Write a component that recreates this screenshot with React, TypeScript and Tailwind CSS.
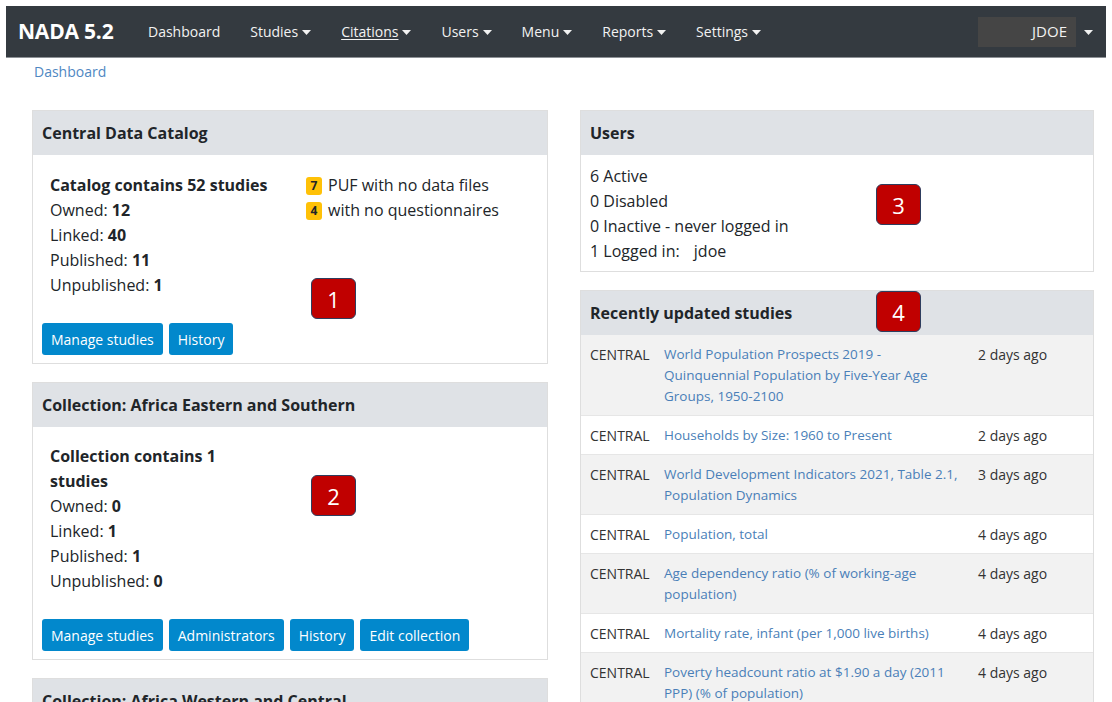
import React from "react";

const font = { fontFamily: '"Open Sans", "Noto Sans", Arial, sans-serif' };

function Caret() {
  return (
    <svg width="9" height="5" viewBox="0 0 9 5" className="ml-[4px] mt-[1px]">
      <path d="M0 0 L9 0 L4.5 5 Z" fill="currentColor" />
    </svg>
  );
}

function NavItem({ label, caret, underline }: { label: string; caret?: boolean; underline?: boolean }) {
  return (
    <div className="flex items-center text-[14px] text-[#f2f2f2]">
      <span className={underline ? "underline underline-offset-2" : ""}>{label}</span>
      {caret && <Caret />}
    </div>
  );
}

function Marker({ n, className }: { n: string; className: string }) {
  return (
    <div
      className={
        "absolute w-[45px] h-[41px] rounded-[6px] bg-[#c00000] border border-[#2e3d5e] flex items-center justify-center text-white text-[22px] leading-none " +
        className
      }
    >
      {n}
    </div>
  );
}

function Btn({ children }: { children: React.ReactNode }) {
  return (
    <div className="h-[32px] px-[9px] flex items-center rounded-[3px] bg-[#0288cc] text-white text-[14px]">
      {children}
    </div>
  );
}

function CardHeader({ title }: { title: string }) {
  return (
    <div className="h-[44px] bg-[#dfe2e6] flex items-center px-[9px] text-[16px] font-bold text-[#212529]">
      {title}
    </div>
  );
}

const rows: { title: string[]; date: string }[] = [
  { title: ["World Population Prospects 2019 -", "Quinquennial Population by Five-Year Age", "Groups, 1950-2100"], date: "2 days ago" },
  { title: ["Households by Size: 1960 to Present"], date: "2 days ago" },
  { title: ["World Development Indicators 2021, Table 2.1,", "Population Dynamics"], date: "3 days ago" },
  { title: ["Population, total"], date: "4 days ago" },
  { title: ["Age dependency ratio (% of working-age", "population)"], date: "4 days ago" },
  { title: ["Mortality rate, infant (per 1,000 live births)"], date: "4 days ago" },
  { title: ["Poverty headcount ratio at $1.90 a day (2011", "PPP) (% of population)"], date: "4 days ago" },
];

export default function App() {
  return (
    <div className="w-[1112px] h-[702px] overflow-hidden bg-white pt-[6px] px-[6px] text-[#212529]" style={font}>
      {/* Navbar */}
      <div className="h-[52px] bg-[#343a40] border-b border-[#8d9196] flex items-center pl-[12px] pr-[12px]">
        <div className="text-white font-bold text-[21px] tracking-[-0.2px] w-[96px]">NADA 5.2</div>
        <div className="flex items-center gap-[30px] ml-[34px]">
          <NavItem label="Dashboard" />
          <NavItem label="Studies" caret />
          <NavItem label="Citations" caret underline />
          <NavItem label="Users" caret />
          <NavItem label="Menu" caret />
          <NavItem label="Reports" caret />
          <NavItem label="Settings" caret />
        </div>
        <div className="ml-auto flex items-center">
          <div className="w-[98px] h-[30px] bg-[#454545] flex items-center justify-end pr-[9px] text-[15px] text-[#f2f2f2]">
            JDOE
          </div>
          <div className="text-[#f2f2f2] ml-[4px] mr-[1px]">
            <Caret />
          </div>
        </div>
      </div>

      {/* Breadcrumb */}
      <div className="pl-[28px] pt-[4px] h-[52px] text-[14px] text-[#4f87c2] leading-[20px]">Dashboard</div>

      <div className="flex pl-[26px] gap-[32px] items-start">
        {/* Left column */}
        <div className="w-[516px] flex flex-col gap-[18px]">
          <div className="relative border border-[#dedede]">
            <CardHeader title="Central Data Catalog" />
            <div className="px-[9px] pt-[18px] pb-[8px]">
              <div className="flex px-[8px] text-[16px] leading-[25px]">
                <div className="w-[256px]">
                  <div className="font-bold">Catalog contains 52 studies</div>
                  <div>Owned: <b>12</b></div>
                  <div>Linked: <b>40</b></div>
                  <div>Published: <b>11</b></div>
                  <div>Unpublished: <b>1</b></div>
                </div>
                <div>
                  <div className="flex items-center">
                    <span className="w-[16px] h-[18px] rounded-[3px] bg-[#ffc107] text-[12px] font-bold flex items-center justify-center mr-[6px]">7</span>
                    PUF with no data files
                  </div>
                  <div className="flex items-center">
                    <span className="w-[16px] h-[18px] rounded-[3px] bg-[#ffc107] text-[12px] font-bold flex items-center justify-center mr-[6px]">4</span>
                    with no questionnaires
                  </div>
                </div>
              </div>
              <div className="flex gap-[6px] mt-[25px]">
                <Btn>Manage studies</Btn>
                <Btn>History</Btn>
              </div>
            </div>
            <Marker n="1" className="left-[278px] top-[167px]" />
          </div>

          <div className="relative border border-[#dedede]">
            <CardHeader title="Collection: Africa Eastern and Southern" />
            <div className="px-[9px] pt-[17px] pb-[8px]">
              <div className="px-[8px] text-[16px] leading-[25px]">
                <div className="font-bold">Collection contains 1<br />studies</div>
                <div>Owned: <b>0</b></div>
                <div>Linked: <b>1</b></div>
                <div>Published: <b>1</b></div>
                <div>Unpublished: <b>0</b></div>
              </div>
              <div className="flex gap-[6px] mt-[25px]">
                <Btn>Manage studies</Btn>
                <Btn>Administrators</Btn>
                <Btn>History</Btn>
                <Btn>Edit collection</Btn>
              </div>
            </div>
            <Marker n="2" className="left-[278px] top-[92px]" />
          </div>

          <div className="relative border border-[#dedede]">
            <CardHeader title="Collection: Africa Western and Central" />
          </div>
        </div>

        {/* Right column */}
        <div className="w-[514px] flex flex-col gap-[18px]">
          <div className="relative border border-[#dedede]">
            <CardHeader title="Users" />
            <div className="px-[9px] pt-[9px] pb-[7px] text-[16px] leading-[25px]">
              <div>6 Active</div>
              <div>0 Disabled</div>
              <div>0 Inactive - never logged in</div>
              <div>1 Logged in: <span className="ml-[10px]">jdoe</span></div>
            </div>
            <Marker n="3" className="left-[295px] top-[73px]" />
          </div>

          <div className="relative border border-[#dedede]">
            <CardHeader title="Recently updated studies" />
            <div className="text-[14px] leading-[21px]">
              {rows.map((r, i) => (
                <div
                  key={i}
                  className={
                    "flex px-[9px] pt-[9px] pb-[8px] border-t border-[#e6e6e6] first:border-t-0 " + (i % 2 === 0 ? "bg-[#f2f2f2]" : "bg-white")
                  }
                >
                  <div className="w-[74px] text-[#333]">CENTRAL</div>
                  <div className="w-[314px] text-[#4a7fb8] text-[13.5px]">
                    {r.title.map((t, j) => (
                      <div key={j} className="whitespace-nowrap">{t}</div>
                    ))}
                  </div>
                  <div className="text-[#333]">{r.date}</div>
                </div>
              ))}
            </div>
            <Marker n="4" className="left-[295px] top-[0px]" />
          </div>
        </div>
      </div>
    </div>
  );
}
